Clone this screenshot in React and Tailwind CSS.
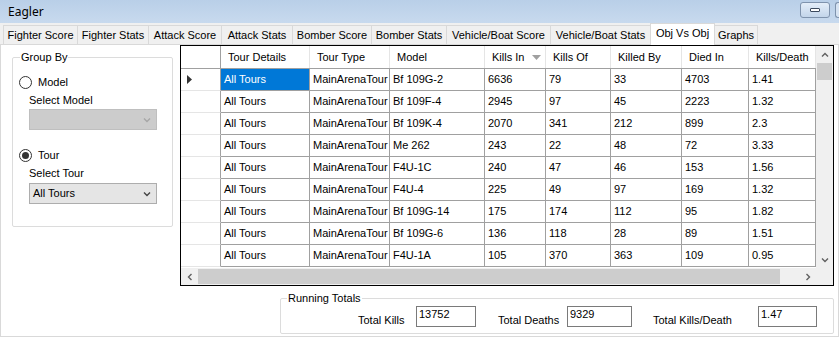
import React from 'react'

const tabs = [
  { label: 'Fighter Score', w: 'w-[74px]' },
  { label: 'Fighter Stats', w: 'w-[71px]' },
  { label: 'Attack Score', w: 'w-[73px]' },
  { label: 'Attack Stats', w: 'w-[71px]' },
  { label: 'Bomber Score', w: 'w-[79px]' },
  { label: 'Bomber Stats', w: 'w-[75px]' },
  { label: 'Vehicle/Boat Score', w: 'w-[104px]' },
  { label: 'Vehicle/Boat Stats', w: 'w-[100px]' },
  { label: 'Obj Vs Obj', w: 'w-[65px]', active: true },
  { label: 'Graphs', w: 'w-[43px]' },
]

const cols = [
  { label: 'Tour Details', w: 'w-[89px]' },
  { label: 'Tour Type', w: 'w-[80px]' },
  { label: 'Model', w: 'w-[95px]' },
  { label: 'Kills In', w: 'w-[61px]', sorted: true },
  { label: 'Kills Of', w: 'w-[65px]' },
  { label: 'Killed By', w: 'w-[71px]' },
  { label: 'Died In', w: 'w-[67px]' },
  { label: 'Kills/Death', w: 'w-[67px]' },
]

const rows = [
  ['All Tours', 'MainArenaTour', 'Bf 109G-2', '6636', '79', '33', '4703', '1.41'],
  ['All Tours', 'MainArenaTour', 'Bf 109F-4', '2945', '97', '45', '2223', '1.32'],
  ['All Tours', 'MainArenaTour', 'Bf 109K-4', '2070', '341', '212', '899', '2.3'],
  ['All Tours', 'MainArenaTour', 'Me 262', '243', '22', '48', '72', '3.33'],
  ['All Tours', 'MainArenaTour', 'F4U-1C', '240', '47', '46', '153', '1.56'],
  ['All Tours', 'MainArenaTour', 'F4U-4', '225', '49', '97', '169', '1.32'],
  ['All Tours', 'MainArenaTour', 'Bf 109G-14', '175', '174', '112', '95', '1.82'],
  ['All Tours', 'MainArenaTour', 'Bf 109G-6', '136', '118', '28', '89', '1.51'],
  ['All Tours', 'MainArenaTour', 'F4U-1A', '105', '370', '363', '109', '0.95'],
]

function Chevron({ dir = 'down', color = '#606060' }) {
  const d = {
    down: 'M1 1.5 L4 4.5 L7 1.5',
    up: 'M1 4.5 L4 1.5 L7 4.5',
    left: 'M4.5 1 L1.5 4 L4.5 7',
    right: 'M1.5 1 L4.5 4 L1.5 7',
  }[dir]
  const horiz = dir === 'left' || dir === 'right'
  return (
    <svg width={horiz ? 6 : 8} height={horiz ? 8 : 6} viewBox={horiz ? '0 0 6 8' : '0 0 8 6'}>
      <path d={d} fill="none" stroke={color} strokeWidth="1.4" />
    </svg>
  )
}

function Radio({ checked, label }) {
  return (
    <div className="flex items-center h-[14px] pl-[6px]">
      <div className="w-[13px] h-[13px] rounded-full border border-[#333] bg-white flex items-center justify-center">
        {checked && <div className="w-[7px] h-[7px] rounded-full bg-[#333]" />}
      </div>
      <span className="ml-[6px] leading-[13px]">{label}</span>
    </div>
  )
}

function Combo({ value, disabled }) {
  return (
    <div
      className={
        disabled
          ? 'ml-[16px] w-[128px] h-[21px] border border-[#bfbfbf] bg-[#cccccc] flex items-center justify-end pr-[5px]'
          : 'ml-[16px] w-[128px] h-[21px] border border-[#adadad] bg-[#e5e5e5] flex items-center pl-[3px] pr-[5px]'
      }
    >
      {value && <span className="flex-1 leading-[13px]">{value}</span>}
      <Chevron dir="down" color={disabled ? '#a6a6a6' : '#444'} />
    </div>
  )
}

function GroupBy() {
  return (
    <fieldset className="w-[161px] h-[176px] border border-[#dcdcdc] rounded-[2px]">
      <legend className="ml-[7px] px-[1px] leading-[13px]">Group By</legend>
      <div className="mt-[11px]">
        <Radio label="Model" />
      </div>
      <div className="mt-[5px] ml-[16px] leading-[13px]">Select Model</div>
      <div className="mt-[2px]">
        <Combo disabled />
      </div>
      <div className="mt-[18px]">
        <Radio checked label="Tour" />
      </div>
      <div className="mt-[5px] ml-[16px] leading-[13px]">Select Tour</div>
      <div className="mt-[3px]">
        <Combo value="All Tours" />
      </div>
    </fieldset>
  )
}

function DataGrid() {
  return (
    <div className="w-[654px] h-[241px] border border-black flex flex-col bg-white">
      <div className="flex h-[222px]">
        <div className="w-[635px] overflow-hidden">
          <div className="flex h-[23px] border-b border-[#a0a0a0]">
            <div className="w-[40px] shrink-0 border-r border-[#a0a0a0]" />
            {cols.map((c) => (
              <div
                key={c.label}
                className={`${c.w} shrink-0 border-r border-[#e5e5e5] pl-[7px] pr-[4px] flex items-center`}
              >
                <span className="flex-1">{c.label}</span>
                {c.sorted && (
                  <svg width="9" height="5" viewBox="0 0 9 5">
                    <path d="M0 0 L9 0 L4.5 5 Z" fill="#a0a0a0" />
                  </svg>
                )}
              </div>
            ))}
          </div>
          {rows.map((r, i) => (
            <div key={i} className="flex h-[22px] border-b border-[#a0a0a0]">
              <div className="w-[40px] shrink-0 border-r border-[#a0a0a0] flex items-center pl-[6px] -mb-px border-b border-b-[#e5e5e5]">
                {i === 0 && (
                  <svg width="5" height="9" viewBox="0 0 5 9">
                    <path d="M0 0 L5 4.5 L0 9 Z" fill="#333" />
                  </svg>
                )}
              </div>
              {r.map((v, j) => (
                <div
                  key={j}
                  className={
                    i === 0 && j === 0
                      ? `${cols[j].w} shrink-0 border-r border-[#a0a0a0] bg-[#0078d7] text-white pl-[3px] flex items-center whitespace-nowrap overflow-hidden`
                      : `${cols[j].w} shrink-0 border-r border-[#a0a0a0] pl-[3px] flex items-center whitespace-nowrap overflow-hidden`
                  }
                >
                  {v}
                </div>
              ))}
            </div>
          ))}
        </div>
        <div className="w-[17px] bg-[#f0f0f0] flex flex-col">
          <div className="h-[17px] flex items-center justify-center">
            <Chevron dir="up" />
          </div>
          <div className="h-[17px] mx-[1px] bg-[#cdcdcd]" />
          <div className="flex-1" />
          <div className="h-[17px] flex items-center justify-center">
            <Chevron dir="down" />
          </div>
        </div>
      </div>
      <div className="flex h-[17px] bg-[#f0f0f0]">
        <div className="w-[17px] flex items-center justify-center">
          <Chevron dir="left" />
        </div>
        <div className="w-[582px] my-[1px] bg-[#cdcdcd]" />
        <div className="flex-1" />
        <div className="w-[17px] flex items-center justify-center">
          <Chevron dir="right" />
        </div>
        <div className="w-[17px]" />
      </div>
    </div>
  )
}

function TotalBox({ label, labelW, boxW, value, gap }) {
  return (
    <div className={`flex items-start ${gap}`}>
      <div className={`${labelW} mt-[8px] leading-[13px]`}>{label}</div>
      <div className={`${boxW} h-[21px] border border-[#7a7a7a] bg-white pl-[2px] pt-[1px] leading-[13px]`}>
        {value}
      </div>
    </div>
  )
}

export default function App() {
  return (
    <div
      className="w-[839px] h-[337px] overflow-hidden bg-[#f0f0f0] text-[11px] text-black flex flex-col"
      style={{ fontFamily: '"Liberation Sans", Arial, sans-serif' }}
    >
      {/* Title bar */}
      <div className="h-[23px] shrink-0 bg-gradient-to-b from-[#b9cfe8] to-[#c8daee] flex items-center pl-[8px]">
        <span className="flex-1 text-[12px]" style={{ fontFamily: '"Noto Sans", "Open Sans", sans-serif' }}>
          Eagler
        </span>
        <div className="w-[30px] h-[16px] mt-[-4px] mr-[5px] rounded-[3px] border border-[#7f93ad] bg-gradient-to-b from-[#e4eef9] to-[#c3d5ea] flex items-center justify-center">
          <div className="w-[10px] h-[4px] border border-[#3c4a5e] bg-white rounded-[1px]" />
        </div>
        <div className="w-[4px] h-[16px] mt-[-4px] rounded-l-[3px] border border-r-0 border-[#7f93ad] bg-[#d6e3f2]" />
      </div>

      {/* Tab strip */}
      <div className="h-[21px] shrink-0 flex items-end pl-[3px] relative z-10">
        {tabs.map((t, i) =>
          t.active ? (
            <div
              key={t.label}
              className={`${t.w} h-[22px] -mb-px bg-white border border-b-0 border-[#d9d9d9] flex items-center justify-center pb-[2px]`}
            >
              {t.label}
            </div>
          ) : (
            <div
              key={t.label}
              className={
                i === tabs.length - 1
                  ? `${t.w} h-[19px] bg-[#f0f0f0] border-t border-r border-[#d9d9d9] flex items-center justify-center`
                  : `${t.w} h-[19px] bg-[#f0f0f0] border-t border-l border-[#d9d9d9] flex items-center justify-center`
              }
            >
              {t.label}
            </div>
          )
        )}
      </div>

      {/* Tab page */}
      <div className="flex-1 bg-white border border-[#d9d9d9] flex">
        <div className="w-[179px] shrink-0 pl-[11px] pt-[6px]">
          <GroupBy />
        </div>
        <div className="flex flex-col">
          <DataGrid />
          <fieldset className="ml-[100px] mt-[6px] w-[554px] h-[42px] border border-[#dcdcdc] rounded-[2px]">
            <legend className="ml-[6px] px-[1px] leading-[13px]">Running Totals</legend>
            <div className="flex mt-[1px] pl-[77px]">
              <TotalBox label="Total Kills" labelW="w-[58px]" boxW="w-[60px]" value="13752" gap="" />
              <TotalBox label="Total Deaths" labelW="w-[69px]" boxW="w-[65px]" value="9329" gap="ml-[22px]" />
              <TotalBox label="Total Kills/Death" labelW="w-[105px]" boxW="w-[59px]" value="1.47" gap="ml-[21px]" />
            </div>
          </fieldset>
        </div>
      </div>
    </div>
  )
}
